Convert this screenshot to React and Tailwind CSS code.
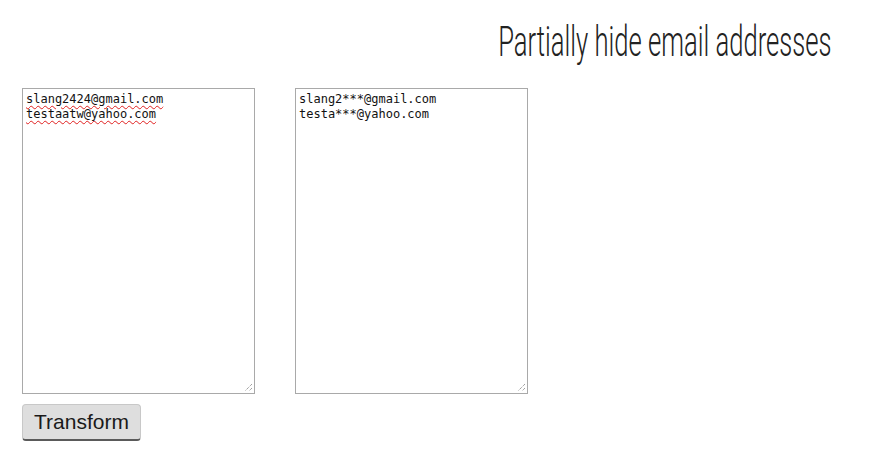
const inputLines = ['slang2424@gmail.com', 'testaatw@yahoo.com']
const outputLines = ['slang2***@gmail.com', 'testa***@yahoo.com']

function Grip() {
  return (
    <svg className="absolute bottom-[1px] right-[1px]" width="9" height="9" viewBox="0 0 9 9">
      <path d="M8 1 L1 8 M8 5 L5 8" stroke="#7a7a7a" strokeWidth="1" strokeDasharray="1 1" fill="none" />
    </svg>
  )
}

function Box({ lines, misspelled }) {
  return (
    <div className="relative h-[306px] w-[233px] border border-[#a9a9a9] bg-white px-[3px] py-[3px] font-['DejaVu_Sans_Mono','Liberation_Mono',monospace] text-[12px] leading-[15px] text-[#111]">
      {lines.map(l => (
        <div key={l}>
          <span className={misspelled ? 'underline decoration-wavy decoration-[#e02020] decoration-1 underline-offset-[2px]' : ''}>{l}</span>
        </div>
      ))}
      <Grip />
    </div>
  )
}

export default function App() {
  return (
    <div className="h-[474px] w-[895px] bg-white">
      <div className="flex justify-end pr-[64px] pt-[18px]">
        <h1 className="origin-right scale-x-[0.61] whitespace-nowrap font-['Roboto',sans-serif] text-[42px] font-light leading-[48px] text-[#222]">
          Partially hide email addresses
        </h1>
      </div>
      <div className="mt-[22px] pl-[22px]">
        <div className="flex gap-[40px]">
          <Box lines={inputLines} misspelled />
          <Box lines={outputLines} />
        </div>
        <button className="mt-[10px] h-[37px] w-[119px] rounded-[4px] border border-[#c8c8c8] border-b-2 border-b-[#5a5a5a] bg-[#dedede] font-['Liberation_Sans',Arial,sans-serif] text-[21px] text-[#1a1a1a]">
          Transform
        </button>
      </div>
    </div>
  )
}
